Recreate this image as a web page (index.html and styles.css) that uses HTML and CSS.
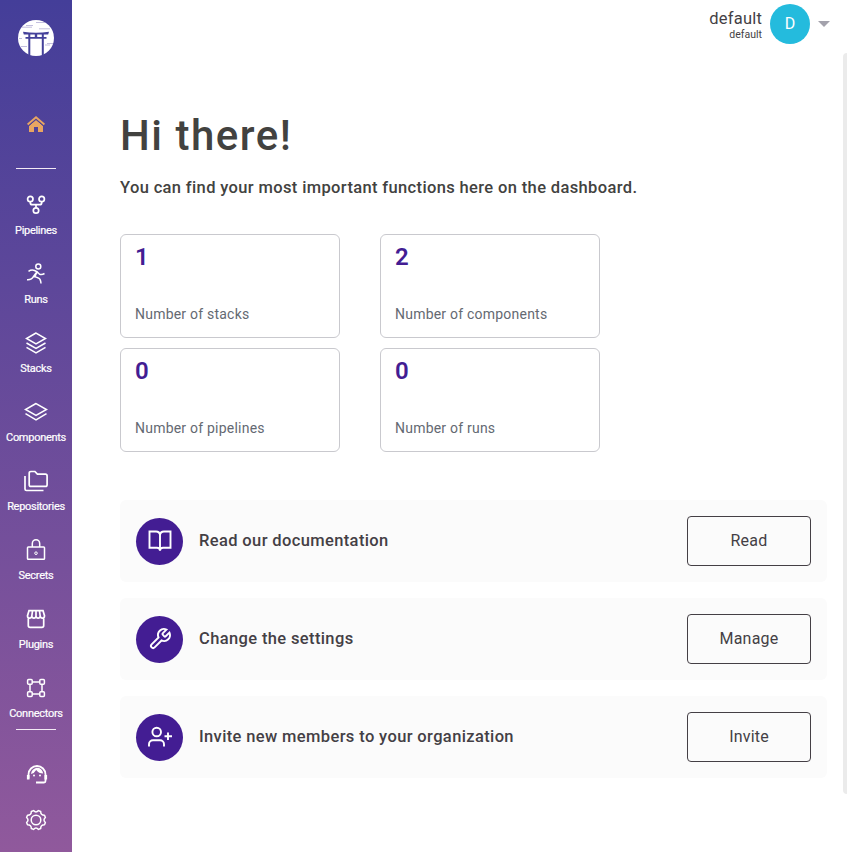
FILE: index.html
```html
<!DOCTYPE html>
<html lang="en">
<head>
<meta charset="utf-8">
<title>Dashboard</title>
<link rel="stylesheet" href="styles.css">
</head>
<body>
<div class="app">
  <aside class="sidebar">
    <svg class="logo" viewBox="0 0 36 36">
      <circle cx="18" cy="18" r="18" fill="#fff"/>
      <g stroke="#a9a3d0" stroke-width=".7" fill="none"><path d="M18 2.500h9M8 5.500h7M4 7.200h10M21 8.800h11M1 18.500h3M29 23.500h6M3 26.500h6M27 25h5"/></g>
      <path fill="#44419a" d="M5 11.800q13 1.700 26 0l-.8 2.800H5.800zM7.500 17h21v1.700h-21zM10.300 14h2v3h-2zM16.800 14h2.400v3h-2.400zM23.800 14h2v3h-2zM10.300 18h2v17h-2zM23.800 18h2v17h-2z"/>
    </svg>
    <a class="home"><svg width="18" height="16" viewBox="0 0 18 16"><path fill="#e8a562" d="M9 3.700 16 9.800V16h-5v-5H7v5H2V9.800z"/><path fill="none" stroke="#4b4099" stroke-width="1" d="M1.500 10 9 3.500l7.500 6.500"/><path fill="none" stroke="#e8a562" stroke-width="1.900" d="M.6 8.500 9 1.300l8.400 7.200"/></svg></a>
    <nav class="nav">
      <a class="item"><svg viewBox="0 0 24 24"><g class="thick"><circle cx="6.300" cy="6" r="2.700"/><circle cx="17.700" cy="6" r="2.700"/><circle cx="12" cy="17.500" r="2.700"/><path d="M6.300 8.700v1q0 2 2 2h7.400q2 0 2-2v-1M12 11.700v3"/></g></svg><span>Pipelines</span></a>
      <a class="item"><svg viewBox="0 0 24 24"><circle cx="14.300" cy="4.500" r="2.500"/><path d="M4.500 9.300q3-2 6-.8l2.500 1.200-3.300 4.500q-2 4-6.700 3.600M13 9.700l2.500 2.500q2.500.8 5-.7M10 14.500q5 1.200 6 2.800 1 2 1 4.200M13 9.700l-2 4.800"/></svg><span>Runs</span></a>
      <a class="item"><svg viewBox="0 0 24 24"><path d="M12 2 2.500 7.500 12 13l9.500-5.500zM2.500 12l9.500 5.500 9.500-5.500M2.500 16.300 12 21.800l9.500-5.500"/></svg><span>Stacks</span></a>
      <a class="item"><svg viewBox="0 0 24 24"><path d="M12 3.500 1.500 9.500 12 15.500l10.500-6zM1.500 13.700 12 19.800l10.500-6.100"/></svg><span>Components</span></a>
      <a class="item"><svg viewBox="0 0 24 24"><g class="thick"><path d="M5.200 4.200q0-1.700 1.700-1.700h4l2.500 2.700h8q1.700 0 1.700 1.700v8.800q0 1.700-1.700 1.700H6.900q-1.700 0-1.700-1.700zM1 7v13q0 1.500 1.500 1.500h17"/></g></svg><span>Repositories</span></a>
      <a class="item"><svg viewBox="0 0 24 24"><rect x="3.500" y="9" width="17" height="12.300" rx=".8"/><path d="M8.300 9V5.700a3.700 4 0 0 1 7.400 0V9"/><circle cx="12" cy="15.200" r="1.300" stroke-width="1"/></svg><span>Secrets</span></a>
      <a class="item"><svg viewBox="0 0 24 24"><g class="thick"><path d="M5 3.700h14l1.500 5q0 2.500-2 2.500t-2.300-2q-.2 2-2.100 2t-2.100-2q-.2 2-2.100 2t-2.100-2q-.3 2-2.300 2t-2-2.500zM8.500 4l-.7 5M12 4v5M15.500 4l.7 5M4.300 11v7.500q0 1.800 1.800 1.800h11.800q1.800 0 1.800-1.800V11"/></g></svg><span>Plugins</span></a>
      <a class="item"><svg viewBox="0 0 24 24"><rect x="3.600" y="3.600" width="4.600" height="4.600" rx="1"/><rect x="15.800" y="3.600" width="4.600" height="4.600" rx="1"/><rect x="3.600" y="15.800" width="4.600" height="4.600" rx="1"/><rect x="15.800" y="15.800" width="4.600" height="4.600" rx="1"/><path d="M8.200 6h7.600M8.200 18h7.600M6 8.200v7.600M18 8.200v7.600"/></svg><span>Connectors</span></a>
    </nav>
    <div class="tools">
      <svg viewBox="0 0 24 24"><path stroke-width="1.800" d="M4.500 16.500v-4a8.500 8.500 0 0 1 17 0V19q0 1.500-1.500 1.500h-8"/><path stroke-width="2.600" d="M4.200 13v4.500M21.800 13v4.500"/><path class="solid" d="M7 12q.5-5 5.500-6.300 5.500-.2 6.700 5.800-4.500 0-7-3.500-1.500 3-5.200 4z"/><circle class="solid" cx="10" cy="13.400" r="1"/><circle class="solid" cx="16" cy="13.400" r="1"/></svg>
      <svg viewBox="0 0 24 24"><circle cx="12" cy="12" r="4.800"/><path stroke-linejoin="round" d="M9.500 2.600q2.500 2.800 5 0l2.200.9q-.2 3.700 3.800 3.800l.9 2.200q-2.800 2.500 0 5l-.9 2.200q-4 .1-3.800 3.800l-2.200.9q-2.500-2.800-5 0l-2.200-.9q.2-3.700-3.800-3.800l-.9-2.200q2.800-2.500 0-5l.9-2.200q4-.1 3.800-3.800z"/></svg>
    </div>
  </aside>
  <div class="page">
    <header class="top">
      <div class="who"><span class="name">default</span><span class="org">default</span></div>
      <div class="avatar">D</div>
      <div class="caret"></div>
    </header>
    <main class="content">
      <h1>Hi there!</h1>
      <p class="lead">You can find your most important functions here on the dashboard.</p>
      <section class="stats">
        <div class="stat"><b>1</b><span>Number of stacks</span></div>
        <div class="stat"><b>2</b><span>Number of components</span></div>
        <div class="stat"><b>0</b><span>Number of pipelines</span></div>
        <div class="stat"><b>0</b><span>Number of runs</span></div>
      </section>
      <section class="actions">
        <div class="row"><div class="badge"><svg viewBox="0 0 24 24"><path d="M12 6a4 4 0 0 0-4-3.500H1.500v16.300H9a3 3 0 0 1 3 3 3 3 0 0 1 3-3h7.500V2.500H16A4 4 0 0 0 12 6zv15.800"/></svg></div><span>Read our documentation</span><button>Read</button></div>
        <div class="row"><div class="badge"><svg viewBox="0 0 24 24"><path d="M14.700 6.300a1 1 0 0 0 0 1.400l1.600 1.600a1 1 0 0 0 1.400 0l3.770-3.770a6 6 0 0 1-7.940 7.940l-6.910 6.910a2.120 2.120 0 0 1-3-3l6.910-6.910a6 6 0 0 1 7.940-7.940z"/></svg></div><span>Change the settings</span><button>Manage</button></div>
        <div class="row"><div class="badge"><svg viewBox="0 0 24 24"><path d="M16 21.500v-2.300a4 4 0 0 0-4-4H5a4 4 0 0 0-4 4v2.300M20 7.500v7.500M24 11.200h-7.500"/><circle cx="8.700" cy="7" r="4.300"/></svg></div><span>Invite new members to your organization</span><button>Invite</button></div>
      </section>
    </main>
    <div class="scrollbar"></div>
  </div>
</div>
</body>
</html>
```
FILE: styles.css
```css
* { box-sizing: border-box; }
body { margin: 0; background: #fff; color: #443f45; font-family: Roboto, "Liberation Sans", sans-serif; overflow: hidden; }
.app { display: flex; height: 852px; }
.sidebar { width: 72px; flex: none; display: flex; flex-direction: column; align-items: center; padding-top: 20px; background: linear-gradient(#443e99, #90599c); color: #fff; }
.sidebar svg { display: block; }
.logo { width: 36px; height: 36px; }
.home { margin-top: 60px; height: 52px; }
.nav { width: 72px; height: 562px; position: relative; padding-top: 25px; display: flex; flex-direction: column; }
.nav::before, .nav::after { content: ""; position: absolute; left: 16px; width: 40px; height: 1px; background: #f3eaf5; }
.nav::before { top: 0; }
.nav::after { bottom: 0; }
.item { height: 69px; flex: none; display: flex; flex-direction: column; align-items: center; }
.item svg, .tools svg { width: 24px; height: 24px; fill: none; stroke: #fff; stroke-width: 1.5; }
.item .thick { stroke-width: 1.700; }
.item span { margin-top: 7px; font-size: 11px; line-height: 14px; letter-spacing: -.28px; white-space: nowrap; -webkit-text-stroke: .2px #fff; }
.tools { margin-top: 32px; display: flex; flex-direction: column; gap: 22px; }
.tools .solid { fill: #fff; stroke: none; }
.page { flex: 1; min-width: 0; position: relative; }
.top { height: 50px; padding: 4px 18px 0 0; display: flex; justify-content: flex-end; align-items: flex-start; }
.who { display: flex; flex-direction: column; align-items: flex-end; padding-top: 4px; }
.name { font-size: 16.500px; line-height: 21px; letter-spacing: .2px; }
.org { font-size: 10.500px; line-height: 11px; }
.avatar { margin-left: 8px; width: 40px; height: 40px; border-radius: 50%; background: #24bbdd; color: #fff; display: grid; place-items: center; font-size: 16px; padding-bottom: 1px; }
.caret { margin: 17px 0 0 8px; border: 5.500px solid transparent; border-width: 6px 5.500px 0; border-top-color: #a3a2ac; width: 11px; }
.top .caret { border-width: 6px 6px 0; width: 12px; margin-right: -1px; }
.top { padding-right: 18px; }
.content { padding: 61px 20px 0 48px; }
h1 { margin: 0; font-size: 42px; line-height: 50px; font-weight: 500; letter-spacing: 1.500px; color: #424240; }
.lead { margin: 17px 0 0; font-size: 16.500px; line-height: 20px; font-weight: 500; color: #424240; letter-spacing: .36px; white-space: nowrap; }
.stats { margin-top: 36px; display: grid; grid-template-columns: 220px 220px; column-gap: 40px; row-gap: 10px; }
.stat { height: 104px; border: 1px solid #c9c9ce; border-radius: 6px; padding: 7px 14px 13px; display: flex; flex-direction: column; justify-content: space-between; }
.stat b { font-size: 24px; line-height: 30px; font-weight: 600; color: #431d93; }
.stat span { font-size: 14px; line-height: 20px; color: #646972; letter-spacing: .22px; }
.actions { margin-top: 48px; width: 707px; display: flex; flex-direction: column; gap: 16px; }
.row { height: 82px; padding: 0 16px; border-radius: 6px; background: #fbfbfb; display: flex; align-items: center; }
.badge { width: 47px; height: 47px; flex: none; border-radius: 50%; background: #431d93; display: grid; place-items: center; }
.badge svg { width: 24px; height: 24px; fill: none; stroke: #fff; stroke-width: 1.900; overflow: visible; }
.row span { margin-left: 16px; flex: 1; font-size: 16.500px; line-height: 20px; font-weight: 500; letter-spacing: .37px; }
button { width: 124px; height: 50px; border: 1px solid #443f45; border-radius: 4px; background: transparent; color: #443f45; font: 16px/20px Roboto, sans-serif; letter-spacing: .2px; padding: 0 0 1px; }
.scrollbar { position: absolute; right: 0; top: 53px; width: 4px; height: 741px; background: #ebebeb; border-radius: 4px 0 0 4px; }
```
